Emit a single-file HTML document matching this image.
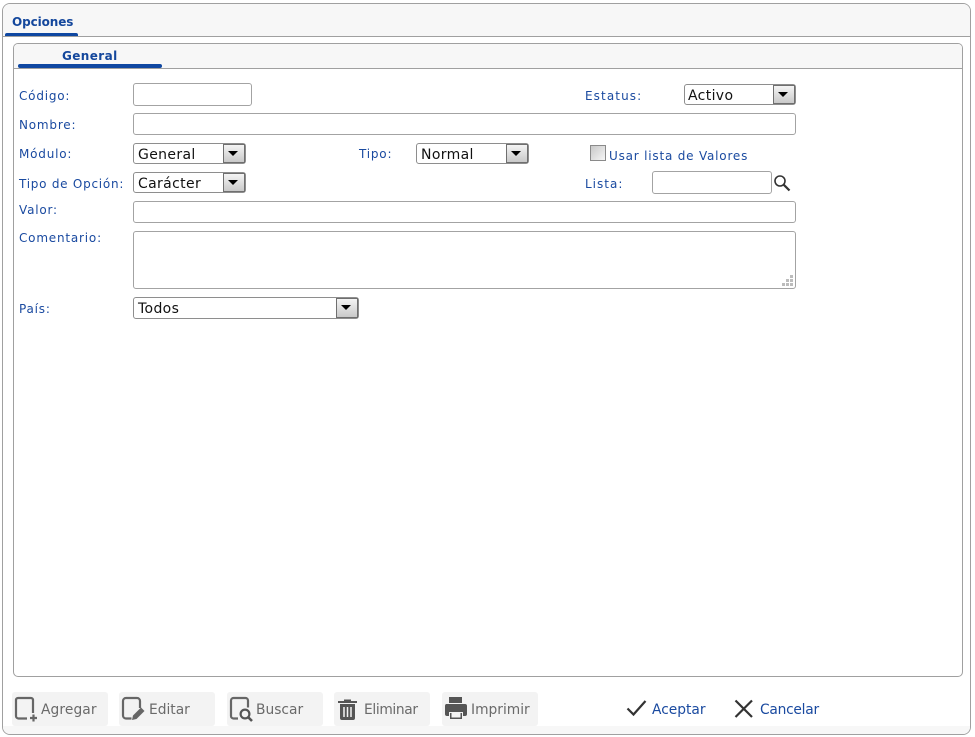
<!DOCTYPE html>
<html><head><meta charset="utf-8"><style>
html,body{margin:0;padding:0;background:#fff;width:975px;height:737px;overflow:hidden;font-family:"DejaVu Sans","Liberation Sans",sans-serif}
div,span,svg{position:absolute;box-sizing:border-box}
.l{font-size:12px;color:#1a4aa0;letter-spacing:.8px;white-space:nowrap;line-height:14px}
.i{border:1px solid #a3a3a3;border-radius:3px;background:#fff}
.s{border:1px solid #8e8e8e;border-radius:3px;background:#fff;font-size:14px;color:#111;line-height:22px;padding-left:4px;letter-spacing:.35px}
.s b{position:absolute;right:0;top:0;bottom:0;width:20px;border:1px solid #6f6f6f;background:linear-gradient(#f4f4f4,#c9c9c9)}
.s b:after{content:"";position:absolute;left:4px;top:6px;border:5px solid transparent;border-top:5px solid #000;border-bottom:0}
.b{background:#f3f3f3;border-radius:3px;top:692px;width:96px;height:34px}
.t{font-size:13.8px;color:#6a6a6a;white-space:nowrap;line-height:16px;top:702px}
.a{font-size:13.8px;color:#1a4aa0;white-space:nowrap;line-height:16px;top:702px}
</style></head><body>
<div style="left:2px;top:3px;width:969px;height:732px;border:1px solid #a0a0a0;border-radius:8px;background:#fff"></div>
<div style="left:3px;top:4px;width:967px;height:33px;background:#f7f7f7;border-radius:7px 7px 0 0;border-bottom:1px solid #a0a0a0"></div>
<div style="left:3px;top:726px;width:967px;height:8px;background:#f7f7f7;border-radius:0 0 7px 7px"></div>
<div style="left:5px;top:33px;width:73px;height:3px;background:#0f47a1;border-radius:2px 2px 0 0"></div>
<div style="left:12px;top:15px;font-size:12px;font-weight:bold;color:#14479c;line-height:15px;white-space:nowrap;letter-spacing:-.1px">Opciones</div>

<div style="left:13px;top:43px;width:950px;height:634px;border:1px solid #a0a0a0;border-radius:5px;background:#fff"></div>
<div style="left:14px;top:44px;width:948px;height:25px;background:#f7f7f7;border-radius:4px 4px 0 0;border-bottom:1px solid #a0a0a0"></div>
<div style="left:18px;top:64px;width:144px;height:4px;background:#0f47a1;border-radius:2px"></div>
<div style="left:62px;top:49px;font-size:12px;font-weight:bold;color:#14479c;line-height:15px;white-space:nowrap;letter-spacing:.4px">General</div>

<div class="l" style="left:19px;top:89px">Código:</div>
<div class="l" style="left:19px;top:118px">Nombre:</div>
<div class="l" style="left:19px;top:147px">Módulo:</div>
<div class="l" style="left:19px;top:177px;letter-spacing:.75px">Tipo de Opción:</div>
<div class="l" style="left:19px;top:203px">Valor:</div>
<div class="l" style="left:19px;top:231px">Comentario:</div>
<div class="l" style="left:19px;top:302px">País:</div>
<div class="l" style="left:585px;top:89px;letter-spacing:1.1px">Estatus:</div>
<div class="l" style="left:359px;top:147px">Tipo:</div>
<div class="l" style="left:609px;top:149px">Usar lista de Valores</div>
<div class="l" style="left:585px;top:177px;letter-spacing:1px">Lista:</div>

<div class="i" style="left:133px;top:83px;width:119px;height:23px"></div>
<div class="i" style="left:133px;top:113px;width:663px;height:22px"></div>
<div class="i" style="left:133px;top:201px;width:663px;height:22px"></div>
<div class="i" style="left:133px;top:231px;width:663px;height:58px"></div>
<div class="i" style="left:652px;top:171px;width:120px;height:23px"></div>

<svg style="left:780px;top:273px" width="14" height="14"><g fill="#bcbcbc"><rect x="10" y="2" width="3" height="3"/><rect x="6" y="6" width="3" height="3"/><rect x="10" y="6" width="3" height="3"/><rect x="2" y="10" width="3" height="3"/><rect x="6" y="10" width="3" height="3"/><rect x="10" y="10" width="3" height="3"/></g></svg>

<div class="s" style="left:684px;top:84px;width:112px;height:21px;padding-left:3px">Activo<b></b></div>
<div class="s" style="left:133px;top:143px;width:113px;height:21px">General<b></b></div>
<div class="s" style="left:416px;top:143px;width:113px;height:21px">Normal<b></b></div>
<div class="s" style="left:133px;top:172px;width:113px;height:21px">Carácter<b></b></div>
<div class="s" style="left:133px;top:297px;width:226px;height:22px">Todos<b></b></div>
<div style="left:590px;top:145px;width:16px;height:16px;border:1px solid #8a8a8a;background:linear-gradient(135deg,#c8c8c8,#f6f6f6)"></div>
<svg style="left:773px;top:174px" width="18" height="18" viewBox="0 0 18 18"><circle cx="7" cy="7" r="5" fill="none" stroke="#333" stroke-width="1.6"/><path d="M10.8 10.8L16.5 16.5" stroke="#333" stroke-width="2.2"/></svg>

<div class="b" style="left:12px"></div>
<div class="b" style="left:119px"></div>
<div class="b" style="left:227px"></div>
<div class="b" style="left:334px"></div>
<div class="b" style="left:442px"></div>

<svg style="left:14px;top:696px" width="24" height="27" viewBox="0 0 24 27"><path d="M13 22.500H4.500a2.500 2.500 0 0 1-2.500-2.500V4a2 2 0 0 1 2-2h13a2 2 0 0 1 2 2V17" fill="none" stroke="#666" stroke-width="2.200"/><path d="M19.500 18.500v7M16 22h7" stroke="#666" stroke-width="2.200"/></svg>
<div class="t" style="left:41px;letter-spacing:.1px">Agregar</div>
<svg style="left:121px;top:696px" width="26" height="26" viewBox="0 0 26 26"><path d="M10.500 22.500H5a3 3 0 0 1-3-3V5a3 3 0 0 1 3-3h11a3 3 0 0 1 3 3v7" fill="none" stroke="#666" stroke-width="2.200"/><path d="M11 24l1-4.500 8-8 3.500 3.500-8 8z" fill="#666"/></svg>
<div class="t" style="left:149px">Editar</div>
<svg style="left:229px;top:696px" width="26" height="27" viewBox="0 0 26 27"><path d="M9 22.500H4.500A2.500 2.500 0 0 1 2 20V4.500A2.500 2.500 0 0 1 4.500 2H16.500A2.500 2.500 0 0 1 19 4.500v7" fill="none" stroke="#666" stroke-width="2.200"/><circle cx="16" cy="18" r="4.400" fill="#f3f3f3" stroke="#555" stroke-width="2.200"/><path d="M19.500 21.500L23 25" stroke="#555" stroke-width="2.600"/></svg>
<div class="t" style="left:256px">Buscar</div>
<svg style="left:337px;top:697px" width="22" height="24" viewBox="0 0 22 24"><path d="M1 4h19V6H1zM7 4V2.500h7V4z" fill="#555"/><path d="M3 7h15v14a2 2 0 0 1-2 2H5a2 2 0 0 1-2-2z" fill="#555"/><path d="M7 10v10M10.500 10v10M14 10v10" stroke="#f3f3f3" stroke-width="1.500"/></svg>
<div class="t" style="left:364px;letter-spacing:-.35px">Eliminar</div>
<svg style="left:444px;top:696px" width="24" height="25" viewBox="0 0 24 25"><path d="M5 1h13v6H5z" fill="#555"/><path d="M2 8h19a2 2 0 0 1 2 2v8a2 2 0 0 1-2 2h-2v-4H5v4H3a2 2 0 0 1-2-2v-8a2 2 0 0 1 1-2z" fill="#555"/><path d="M6 17h12v6H6z" fill="#555"/><path d="M7.500 16.500h9v5h-9z" fill="#f3f3f3"/></svg>
<div class="t" style="left:471px">Imprimir</div>

<svg style="left:626px;top:699px" width="22" height="18" viewBox="0 0 22 18"><path d="M1.500 9.500L7.500 15.500 19.500 2" fill="none" stroke="#333" stroke-width="2.200"/></svg>
<div class="a" style="left:652px">Aceptar</div>
<svg style="left:734px;top:699px" width="20" height="20" viewBox="0 0 20 20"><path d="M1.500 1.500L18 18M18 1.500L1.500 18" fill="none" stroke="#333" stroke-width="2.200"/></svg>
<div class="a" style="left:760px;letter-spacing:-.25px">Cancelar</div>
</body></html>
